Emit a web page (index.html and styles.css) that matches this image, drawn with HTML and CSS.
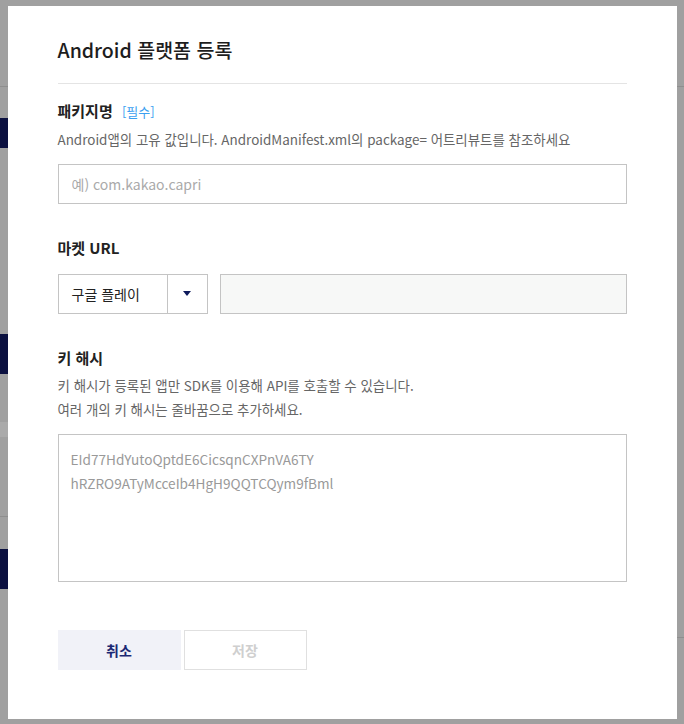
FILE: index.html
```html
<!DOCTYPE html>
<html lang="ko">
<head>
    <meta charset="UTF-8">
    <meta name="viewport" content="width=device-width, initial-scale=1.0">
    <title>Android 플랫폼 등록</title>
    <link rel="stylesheet" href="styles.css">
</head>
<body>
    <div class="page-bg">
        <div class="bg-line top"></div>
        <div class="bg-tab one"></div>
        <div class="bg-tab two"></div>
        <div class="bg-band"></div>
        <div class="bg-line mid"></div>
        <div class="bg-tab three"></div>
        <div class="bg-line right"></div>
    </div>
    <div class="overlay">
        <div class="modal">
            <h1 class="modal-title">Android 플랫폼 등록</h1>

            <div class="field">
                <div class="field-label">패키지명 <span class="required">[필수]</span></div>
                <p class="field-desc">Android앱의 고유 값입니다. AndroidManifest.xml의 package= 어트리뷰트를 참조하세요</p>
                <input class="text-input" type="text" placeholder="예) com.kakao.capri">
            </div>

            <div class="field">
                <div class="field-label">마켓 URL</div>
                <div class="market-row">
                    <div class="select">
                        <span class="select-value">구글 플레이</span>
                        <span class="select-arrow"></span>
                    </div>
                    <input class="text-input filled" type="text">
                </div>
            </div>

            <div class="field">
                <div class="field-label">키 해시</div>
                <p class="field-desc">키 해시가 등록된 앱만 SDK를 이용해 API를 호출할 수 있습니다.<br>여러 개의 키 해시는 줄바꿈으로 추가하세요.</p>
                <textarea class="hash-input" placeholder="EId77HdYutoQptdE6CicsqnCXPnVA6TY&#10;hRZRO9ATyMcceIb4HgH9QQTCQym9fBml"></textarea>
            </div>

            <div class="actions">
                <button class="btn cancel">취소</button>
                <button class="btn save" disabled>저장</button>
            </div>
        </div>
    </div>
</body>
</html>
```

FILE: styles.css
```css
* {
    box-sizing: border-box;
}
body {
    margin: 0;
    width: 684px;
    height: 724px;
    overflow: hidden;
    font-family: "Noto Sans CJK KR", "Noto Sans", sans-serif;
    color: #222;
    background-color: #a0a0a0;
    position: relative;
}
.page-bg {
    position: absolute;
    inset: 0;
}
.bg-line {
    position: absolute;
    height: 1px;
    background-color: #8e8e8e;
}
.bg-line.top {
    top: 86px;
    left: 0;
    right: 0;
}
.bg-line.mid {
    top: 516px;
    left: 0;
    width: 10px;
}
.bg-line.right {
    top: 637px;
    right: 0;
    width: 10px;
}
.bg-tab {
    position: absolute;
    left: 0;
    width: 10px;
    background-color: #0b1040;
}
.bg-tab.one {
    top: 118px;
    height: 30px;
}
.bg-tab.two {
    top: 334px;
    height: 40px;
}
.bg-tab.three {
    top: 549px;
    height: 40px;
}
.bg-band {
    position: absolute;
    top: 422px;
    left: 0;
    width: 10px;
    height: 15px;
    background-color: #aaaaaa;
}
.overlay {
    position: absolute;
    inset: 0;
    display: flex;
    align-items: center;
    justify-content: center;
}
.modal {
    width: 669px;
    height: 713px;
    background-color: #fff;
    padding: 30px 50px 48px;
}
.modal-title {
    margin: 0;
    font-size: 19.5px;
    font-weight: 500;
    line-height: 28px;
    color: #1d1d1d;
    padding-bottom: 19px;
    border-bottom: 1px solid #e4e4e4;
}
.field {
    margin-top: 33px;
}
.field:first-of-type {
    margin-top: 16px;
}
.field-label {
    font-size: 15px;
    font-weight: 700;
    line-height: 22px;
    color: #222;
}
.required {
    font-size: 13px;
    font-weight: 400;
    color: #3b9ff0;
    margin-left: 5px;
}
.field-desc {
    margin: 4px 0 13px;
    font-size: 13.45px;
    line-height: 24px;
    color: #666;
}
.text-input {
    display: block;
    width: 100%;
    height: 40px;
    border: 1px solid #c4c4c4;
    padding: 0 13px;
    font-family: inherit;
    font-size: 14px;
    color: #333;
    outline: none;
}
.text-input::placeholder {
    color: #aaa;
}
.market-row {
    display: flex;
    gap: 12px;
    margin-top: 15px;
}
.select {
    display: flex;
    width: 150px;
    height: 40px;
    border: 1px solid #c4c4c4;
    flex-shrink: 0;
}
.select-value {
    flex: 1;
    padding-left: 13px;
    font-size: 14px;
    line-height: 38px;
    color: #222;
    border-right: 1px solid #c4c4c4;
}
.select-arrow {
    width: 39px;
    display: flex;
    align-items: center;
    justify-content: center;
}
.select-arrow::after {
    content: "";
    border-left: 4px solid transparent;
    border-right: 4px solid transparent;
    border-top: 5px solid #0e1a5c;
}
.text-input.filled {
    background-color: #f7f8f7;
}
.hash-input {
    display: block;
    width: 100%;
    height: 148px;
    border: 1px solid #c4c4c4;
    padding: 12px 12px;
    font-family: inherit;
    font-size: 13.6px;
    line-height: 24px;
    color: #333;
    resize: none;
    outline: none;
}
.hash-input::placeholder {
    color: #999;
}
.actions {
    display: flex;
    gap: 3px;
    margin-top: 48px;
}
.btn {
    width: 123px;
    height: 40px;
    font-family: inherit;
    font-size: 14px;
    font-weight: 700;
    cursor: pointer;
}
.btn.cancel {
    background-color: #f1f2f8;
    border: none;
    color: #1b2873;
}
.btn.save {
    background-color: #fff;
    border: 1px solid #e0e0e0;
    color: #cfcfcf;
    cursor: not-allowed;
}
```
